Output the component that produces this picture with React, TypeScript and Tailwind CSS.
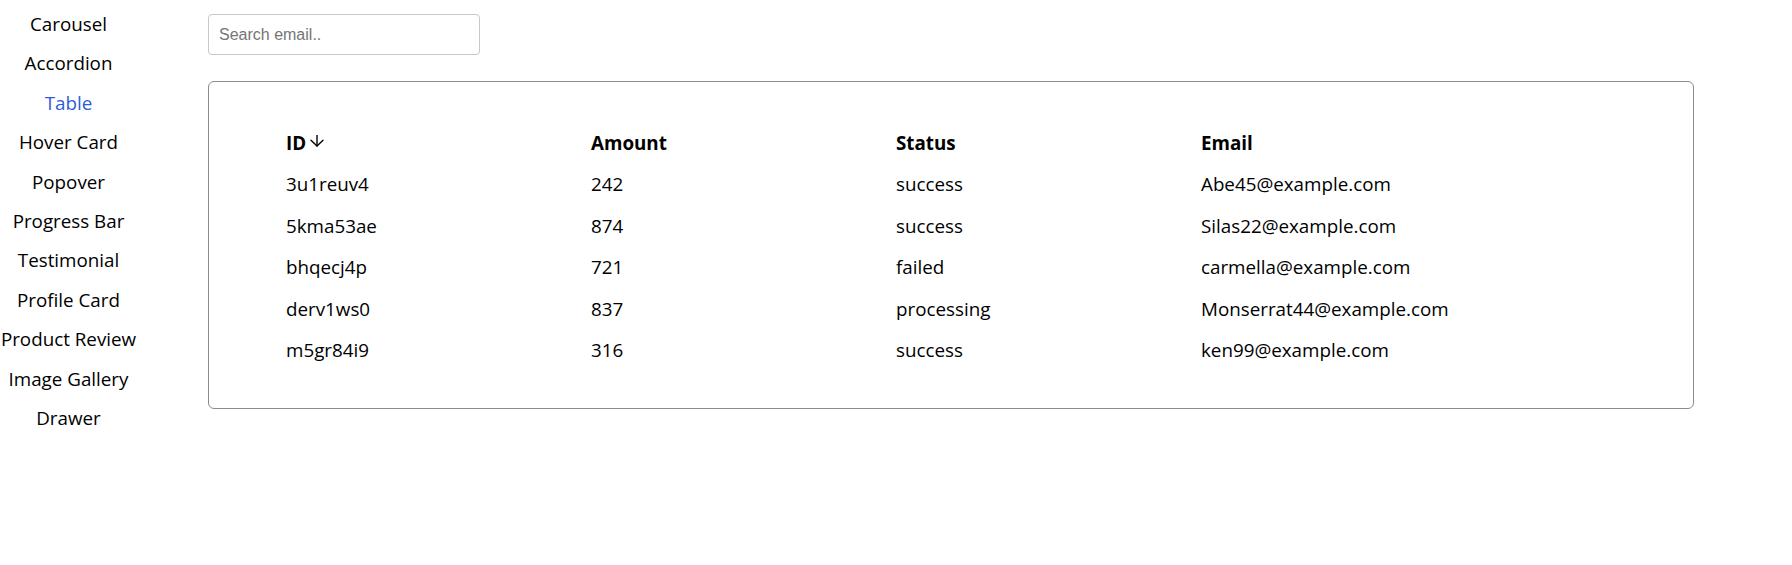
import React from "react";

const navItems = [
  "Carousel",
  "Accordion",
  "Table",
  "Hover Card",
  "Popover",
  "Progress Bar",
  "Testimonial",
  "Profile Card",
  "Product Review",
  "Image Gallery",
  "Drawer",
];

const rows = [
  { id: "3u1reuv4", amount: "242", status: "success", email: "Abe45@example.com" },
  { id: "5kma53ae", amount: "874", status: "success", email: "Silas22@example.com" },
  { id: "bhqecj4p", amount: "721", status: "failed", email: "carmella@example.com" },
  { id: "derv1ws0", amount: "837", status: "processing", email: "Monserrat44@example.com" },
  { id: "m5gr84i9", amount: "316", status: "success", email: "ken99@example.com" },
];

function ArrowDownIcon() {
  return (
    <svg width="14" height="12" viewBox="0 0 14 12" fill="none" className="ml-[4px] mt-[-3px]">
      <path d="M7 0.5V11" stroke="#000" strokeWidth="1.4" strokeLinecap="round" />
      <path d="M1 5.2L7 11L13 5.2" stroke="#000" strokeWidth="1.4" strokeLinecap="round" strokeLinejoin="round" />
    </svg>
  );
}

export default function App() {
  return (
    <div className="flex min-h-[565px] w-full bg-white text-black font-['Open_Sans',sans-serif]">
      <nav className="flex w-[137px] shrink-0 flex-col pt-[5px]">
        {navItems.map((item) => (
          <div
            key={item}
            className={`h-[39.4px] text-center text-[18.8px] leading-[39.4px] whitespace-nowrap ${
              item === "Table" ? "text-[#2f5bdc]" : "text-black"
            }`}
          >
            {item}
          </div>
        ))}
      </nav>
      <main className="flex flex-col pl-[71px] pt-[14px]">
        <input
          type="text"
          placeholder="Search email.."
          className="h-[41px] w-[272px] rounded-[4px] border border-[#c8c8c8] px-[10px] text-[16px] font-['Liberation_Sans',Arial,sans-serif] placeholder:text-[#757575] outline-none"
        />
        <div className="mt-[26px] w-[1486px] rounded-[6px] border border-[#8c8c8c] pl-[77px] pt-[40px] pb-[37px]">
          <div className="grid grid-cols-[305px_305px_305px_305px] text-[18.8px]">
            <div className="flex h-[41.5px] items-center font-bold">
              ID
              <ArrowDownIcon />
            </div>
            <div className="flex h-[41.5px] items-center font-bold">Amount</div>
            <div className="flex h-[41.5px] items-center font-bold">Status</div>
            <div className="flex h-[41.5px] items-center font-bold">Email</div>
            {rows.map((r) => (
              <React.Fragment key={r.id}>
                <div className="flex h-[41.5px] items-center">{r.id}</div>
                <div className="flex h-[41.5px] items-center">{r.amount}</div>
                <div className="flex h-[41.5px] items-center">{r.status}</div>
                <div className="flex h-[41.5px] items-center">{r.email}</div>
              </React.Fragment>
            ))}
          </div>
        </div>
      </main>
    </div>
  );
}
